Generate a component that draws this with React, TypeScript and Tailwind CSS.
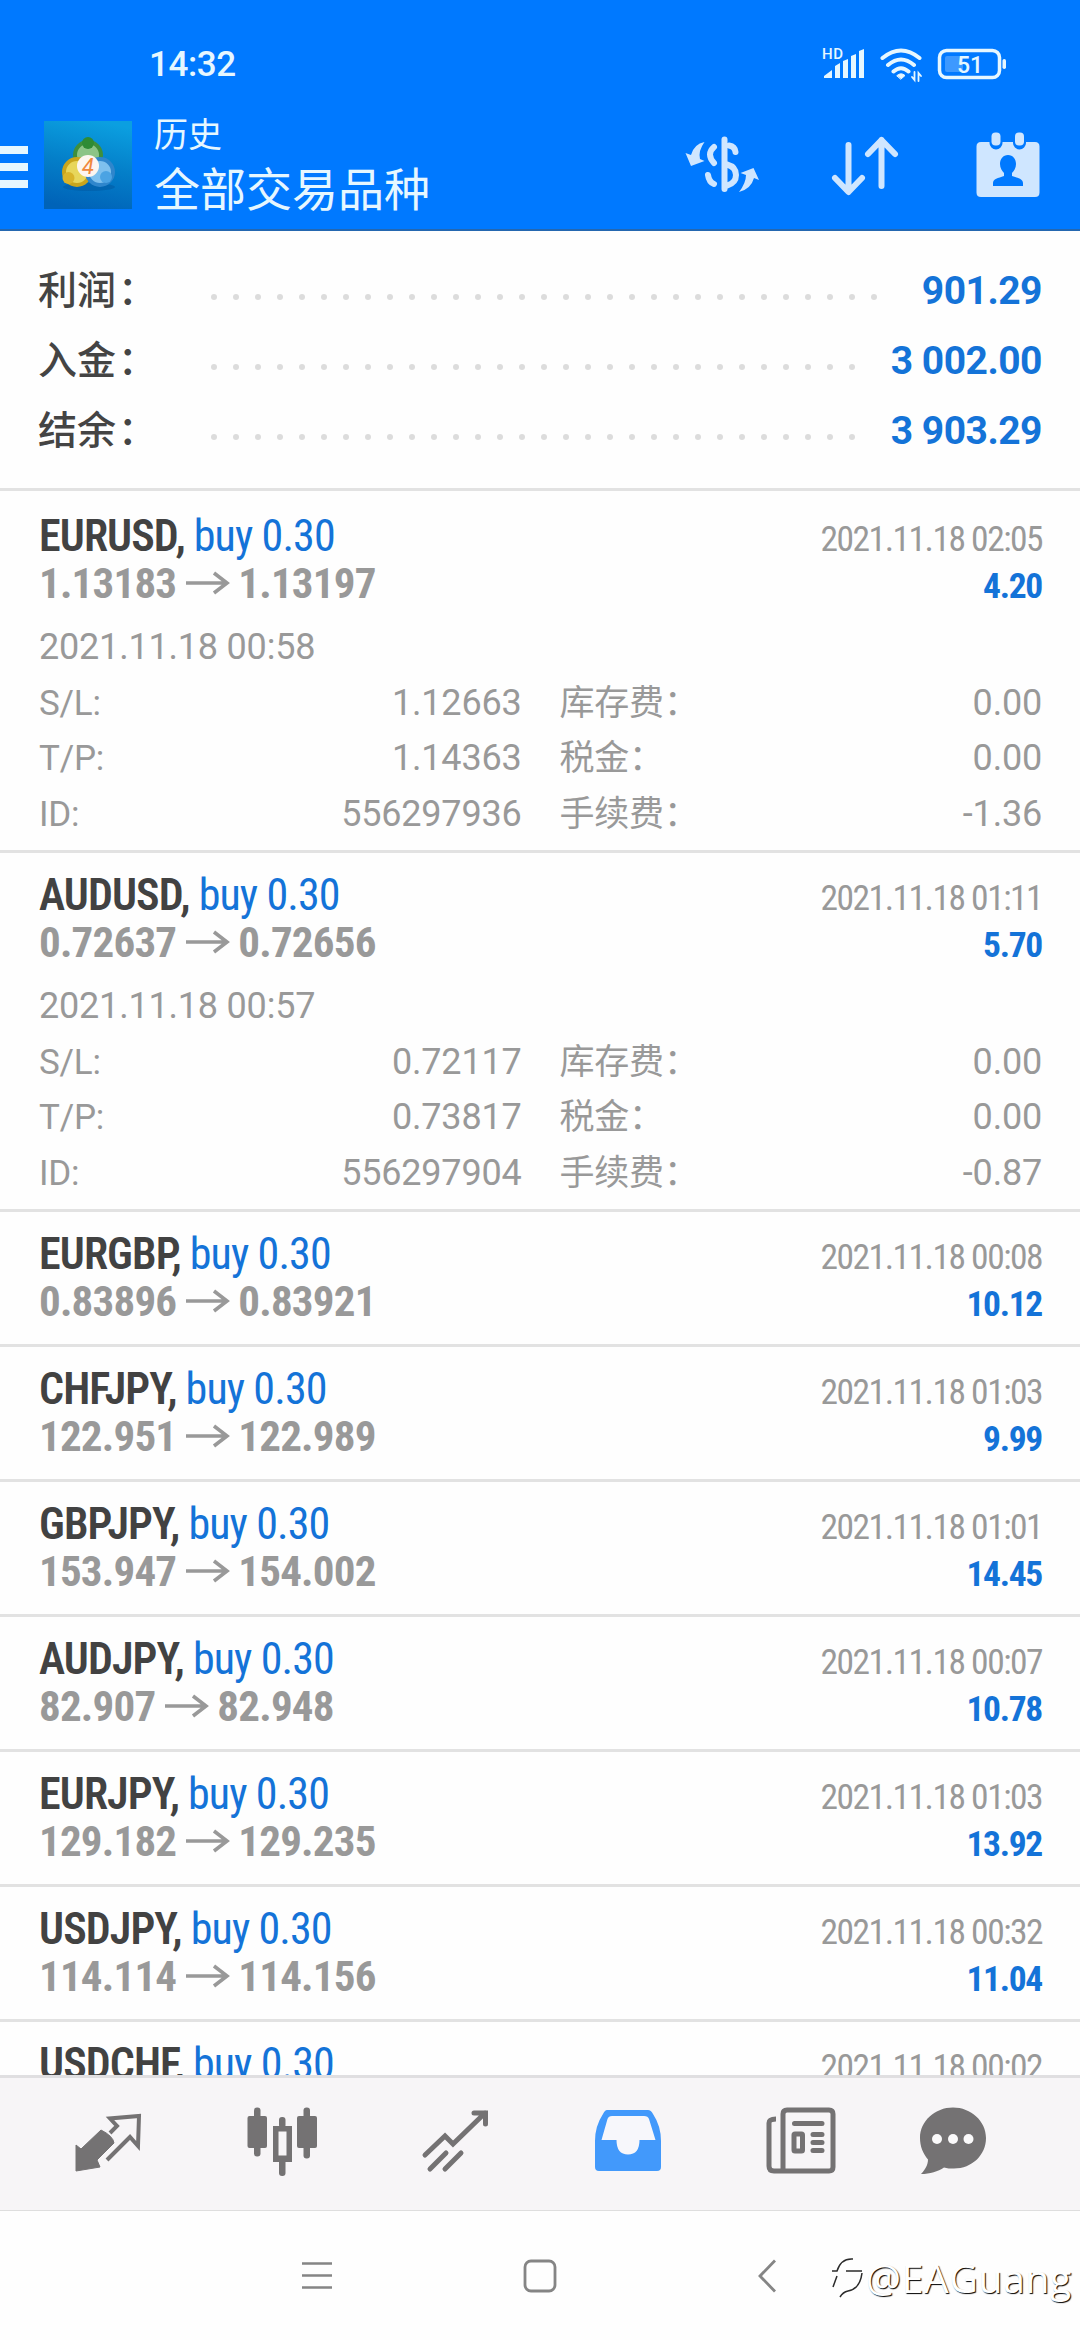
import React from 'react';

interface Deal {
  symbol: string;
  open: string;
  close: string;
  time: string;
  profit: string;
  details?: {
    openTime: string;
    sl: string;
    tp: string;
    id: string;
    swap: string;
    tax: string;
    fee: string;
  };
}

const SUMMARY = [
  { label: '利润', value: '901.29', dots: 31 },
  { label: '入金', value: '3 002.00', dots: 30 },
  { label: '结余', value: '3 903.29', dots: 30 },
];

const DEALS: Deal[] = [
  {
    symbol: 'EURUSD', open: '1.13183', close: '1.13197', time: '2021.11.18 02:05', profit: '4.20',
    details: { openTime: '2021.11.18 00:58', sl: '1.12663', tp: '1.14363', id: '556297936', swap: '0.00', tax: '0.00', fee: '-1.36' },
  },
  {
    symbol: 'AUDUSD', open: '0.72637', close: '0.72656', time: '2021.11.18 01:11', profit: '5.70',
    details: { openTime: '2021.11.18 00:57', sl: '0.72117', tp: '0.73817', id: '556297904', swap: '0.00', tax: '0.00', fee: '-0.87' },
  },
  { symbol: 'EURGBP', open: '0.83896', close: '0.83921', time: '2021.11.18 00:08', profit: '10.12' },
  { symbol: 'CHFJPY', open: '122.951', close: '122.989', time: '2021.11.18 01:03', profit: '9.99' },
  { symbol: 'GBPJPY', open: '153.947', close: '154.002', time: '2021.11.18 01:01', profit: '14.45' },
  { symbol: 'AUDJPY', open: '82.907', close: '82.948', time: '2021.11.18 00:07', profit: '10.78' },
  { symbol: 'EURJPY', open: '129.182', close: '129.235', time: '2021.11.18 01:03', profit: '13.92' },
  { symbol: 'USDJPY', open: '114.114', close: '114.156', time: '2021.11.18 00:32', profit: '11.04' },
  { symbol: 'USDCHF', open: '', close: '', time: '2021.11.18 00:02', profit: '' },
];

const StatusBar = () => (
  <div className="h-[104px] pt-[44px] pl-[149px] pr-[73px] flex justify-between text-[#e6f7ff]">
    <span className="text-[35px] leading-[41px] font-medium tracking-[-0.4px]">14:32</span>
    <div className="flex h-10 items-center">
      {/* signal */}
      <svg className="w-[44px] h-10" viewBox="822 44 44 40" fill="currentColor">
        <text x="822" y="59" fontSize="15" fontWeight="500" letterSpacing="0.6">HD</text>
        <path d="M824 78v-2l8-6v8zM835 66l5-3v15h-5zM843 61l5-2v19h-5zM851 56l5-2v24h-5zM859 51l5-2v29h-5z" />
      </svg>
      {/* wifi */}
      <svg className="w-[44px] h-10 ml-[13px]" viewBox="879 44 44 40" fill="none" stroke="currentColor" strokeWidth="4" strokeLinecap="round">
        <path d="M882.500 58Q901 43 919.500 58M888 65Q901 54 914 65M893.500 71.500Q901 65 908.500 71.500" />
        <path d="M897 75.500Q901 72 905 75.500L901 79z" fill="currentColor" strokeWidth="1" />
        <path d="M914.500 72v8l-2.500-3M918.500 81v-8l2.500 3" strokeWidth="1.800" />
      </svg>
      {/* battery */}
      <svg className="w-[70px] h-10 ml-[14px]" viewBox="937 44 70 40" fill="none">
        <rect x="939.500" y="50.500" width="60" height="27" rx="7" stroke="currentColor" strokeWidth="3.500" />
        <rect x="945" y="56" width="18" height="16" rx="2" fill="#3d99ff" />
        <rect x="1002.500" y="59" width="3.500" height="10" rx="1.700" fill="currentColor" />
        <text x="957" y="72.500" fontSize="23" fontWeight="500" fill="currentColor">51</text>
      </svg>
    </div>
  </div>
);

const AppLogo = () => (
  <svg className="w-[88px] h-[88px] ml-4 mb-[3px]" viewBox="0 0 88 88">
    <defs>
      <linearGradient id="logoBg" x1="0.600" y1="0" x2="0.400" y2="1">
        <stop offset="0" stopColor="#0b9fe0" />
        <stop offset="0.500" stopColor="#047fc9" />
        <stop offset="1" stopColor="#0063b8" />
      </linearGradient>
    </defs>
    <rect width="88" height="88" fill="url(#logoBg)" />
    <ellipse cx="45" cy="66" rx="26" ry="4" fill="#01579f" opacity="0.500" />
    <circle cx="44" cy="34" r="13" fill="#8cc487" stroke="#3f8f3c" strokeWidth="4" />
    <circle cx="33" cy="51" r="13" fill="#e8d65a" stroke="#c9a51c" strokeWidth="4" />
    <circle cx="56" cy="51" r="13" fill="#7ec0ee" stroke="#2f86cc" strokeWidth="4" />
    <circle cx="44" cy="22" r="6" fill="#2e8b35" />
    <circle cx="24.500" cy="57" r="6" fill="#d9b42a" />
    <circle cx="62" cy="56" r="6" fill="#4ba3e3" />
    <circle cx="44" cy="45" r="11" fill="#fdf6f0" />
    <text x="44" y="53" textAnchor="middle" fontSize="22" fontStyle="italic" fill="#f0883c">4</text>
  </svg>
);

const AppBar = () => (
  <div className="h-[125px] flex items-center text-[#e6f7ff]">
    <div className="flex flex-col gap-[9px] w-7">
      <div className="h-2 bg-current" />
      <div className="h-2 bg-current" />
      <div className="h-2 bg-current" />
    </div>
    <AppLogo />
    <div className="ml-[22px] flex-1 pt-[2px]">
      <div className="text-[34px] leading-[45px]">历史</div>
      <div className="text-[46px] leading-[64px]">全部交易品种</div>
    </div>
    <div className="flex text-[#cfe6ff] pr-[34px] pb-1">
      <svg className="w-[80px] h-[70px] mr-[68px]" viewBox="682 129 80 70" fill="none" stroke="currentColor" strokeWidth="6" strokeLinecap="round">
        <path d="M724.500 138.500v49.500" />
        <path d="M714 146Q706 153 714 162M729 144.500Q735 145.500 735.500 151M727 163.500Q736 166 736 174Q736 182 727 184.500M708 174Q709 181 714 183" />
        <path stroke="none" fill="currentColor" d="M704.500 141Q694 143 691 154L685.500 152L691 165L704.500 160L700 158Q698 150 704.500 141ZM739 191Q751 188 754 177L759 179L753.500 167L740.500 172L746 174Q746 182 739 191Z" />
      </svg>
      <svg className="w-[70px] h-[70px] mr-[73px]" viewBox="830 129 70 70" fill="none" stroke="currentColor" strokeWidth="6" strokeLinecap="round" strokeLinejoin="round">
        <path d="M848.500 144v46M835 177l13.500 14l13.500-14M881.500 185v-46M868 153l13.500-14l13.500 14" />
      </svg>
      <svg className="w-[73px] h-[70px]" viewBox="973 129 73 70" fill="currentColor">
        <path d="M981 141h8.500v1a6.500 6.500 0 0 0 13 0v-1h10.500v1a6.500 6.500 0 0 0 13 0v-1h9q4.500 0 4.500 4.500v46q0 4.500-4.500 4.500h-54q-4.500 0-4.500-4.500v-46q0-4.500 4.500-4.500z" />
        <rect x="991.500" y="131.500" width="9" height="13" rx="4" />
        <rect x="1015" y="131.500" width="9" height="13" rx="4" />
        <path fill="#0079ff" d="M1008 154c5 0 8 4 8 9c0 4-2 7-4 9v3c6 2 11 3 11 7v3h-30v-3c0-4 5-5 11-7v-3c-2-2-4-5-4-9c0-5 3-9 8-9z" />
      </svg>
    </div>
  </div>
);

const Summary = () => (
  <div className="h-[260px] border-b-[3px] border-[#e2e2e2] pt-[25px] pl-[38px] pr-[38px]">
    {SUMMARY.map((row) => (
      <div key={row.label} className="flex h-[70px] items-center justify-between text-[39px] leading-[70px]">
        <div className="flex items-center">
          <span className="w-[173px] font-medium text-[#444444]">
            {row.label}<span className="ml-[2px]">：</span>
          </span>
          <div className="flex gap-4 pt-[12px]">
            {Array.from({ length: row.dots }, (_, i) => (
              <span key={i} className="size-1.5 rounded-full bg-[#dcdcdc]" />
            ))}
          </div>
        </div>
        <span className="font-bold tracking-[-0.5px] text-[#1473d8]">{row.value}</span>
      </div>
    ))}
  </div>
);

const DetailCell = ({ label, value }: { label: string; value: string }) => (
  <div className="flex justify-between">
    <span className="text-[35px]">{label}</span>
    <span>{value}</span>
  </div>
);

const DealRow = ({ deal }: { deal: Deal }) => (
  <div className="pt-[18px] pl-[39px] pr-[38px] border-b-[3px] border-[#e2e2e2]">
    <div className="flex h-12 items-baseline justify-between leading-[48px] [font-stretch:75%]">
      <div className="text-[44px]">
        <span className="font-semibold tracking-[-0.9px] text-[#424242]">{deal.symbol},</span>
        <span className="ml-[9px] tracking-[-0.9px] text-[#1473d8]">buy 0.30</span>
      </div>
      <span className="text-[35.5px] tracking-[-1.5px] text-[#999999]">{deal.time}</span>
    </div>
    <div className="flex h-12 items-baseline justify-between leading-[47px] font-bold [font-stretch:75%]">
      <div className="flex text-[43px] text-[#999999]">
        <span className="tracking-[-0.8px]">{deal.open}</span>
        {deal.open && (
          <svg className="w-[44px] h-6 ml-[10px] mr-[8px] mt-[11px]" viewBox="0 0 44 24" fill="none" stroke="currentColor" strokeWidth="3.600">
            <path d="M0 12h41M28 2l13 10l-13 10" />
          </svg>
        )}
        <span className="tracking-[-0.8px]">{deal.close}</span>
      </div>
      <span className="text-[35.5px] tracking-[-1.3px] text-[#1473d8]">{deal.profit}</span>
    </div>
    {deal.details ? (
      <div className="pt-[12px] pb-[8px] text-[36px] leading-[55.5px] text-[#999999]">
        <div className="tracking-[-0.2px]">{deal.details.openTime}</div>
        <div className="grid grid-cols-2 gap-x-[38px] tracking-[-0.2px]">
          <DetailCell label="S/L:" value={deal.details.sl} />
          <DetailCell label="库存费：" value={deal.details.swap} />
          <DetailCell label="T/P:" value={deal.details.tp} />
          <DetailCell label="税金：" value={deal.details.tax} />
          <DetailCell label="ID:" value={deal.details.id} />
          <DetailCell label="手续费：" value={deal.details.fee} />
        </div>
      </div>
    ) : (
      <div className="h-[18px]" />
    )}
  </div>
);

const TabBar = () => (
  <div className="h-[136px] shrink-0 border-t-[3px] border-b border-t-[#e0dfe1] border-b-[#dedede] bg-[#f7f5f7] pl-[22px] flex text-[#747273]">
    {/* quotes */}
    <div className="w-[173px] flex justify-center pt-[26px]">
      <svg className="w-[74px] h-[76px]" viewBox="72 2104 74 76" fill="none" stroke="currentColor" strokeWidth="4">
        <path fill="currentColor" strokeWidth="1" d="M76 2145l5 4l20-19q12 6 13 13l-17 17l3 7l-24 4z" />
        <path d="M107 2160l23-23l8 9l1-30l-29 2.500l7 7.500l-7 7" />
      </svg>
    </div>
    {/* chart */}
    <div className="w-[173px] flex justify-center pt-[26px]">
      <svg className="w-[74px] h-[76px]" viewBox="244 2104 74 76" fill="currentColor">
        <rect x="253" y="2107.500" width="6.500" height="49" rx="3" />
        <rect x="246.500" y="2116" width="19.500" height="32" rx="2" />
        <rect x="302.500" y="2107.500" width="6.500" height="51" rx="3" />
        <rect x="296" y="2116" width="20" height="32" rx="2" />
        <rect x="278" y="2117" width="6.500" height="11" rx="3" />
        <rect x="278" y="2158" width="6.500" height="18" rx="3" />
        <path fillRule="evenodd" d="M272 2126h19v36h-19zM277.500 2131.500v24h8v-24z" />
      </svg>
    </div>
    {/* trade */}
    <div className="w-[173px] flex justify-center pt-[26px]">
      <svg className="w-[74px] h-[76px]" viewBox="417 2104 74 76" fill="none" stroke="currentColor" strokeWidth="5" strokeLinecap="round">
        <path d="M424 2155l20-19l8 8l32-31M473 2113h11.500v11M429 2169l16-16M444 2169l16-16" />
      </svg>
    </div>
    {/* history, active */}
    <div className="w-[173px] flex justify-center pt-[26px]">
      <svg className="w-[74px] h-[76px]" viewBox="591 2104 74 76">
        <path fill="#4299fb" d="M607 2110h41q3 0 5 4q8 12 8 27v26q0 4-4 4h-58q-4 0-4-4v-26q0-15 8-27q2-4 4-4z" />
        <path fill="#f7f7fb" d="M612 2116h32q4 0 5 3l6.500 21h-16q0 14.500-11.500 14.500t-11.500-14.500h-15l6-21q1-3 4.500-3z" />
      </svg>
    </div>
    {/* news */}
    <div className="w-[173px] flex justify-center pt-[26px]">
      <svg className="w-[74px] h-[76px]" viewBox="764 2104 74 76" fill="none" stroke="currentColor" strokeWidth="5">
        <path d="M783 2171v-57q0-4 4-4h42q4 0 4 4v53q0 4-4 4h-55q-5 0-5-5v-43q0-4 7-4" />
        <path d="M794.500 2123.500h27.500M813 2134.500h9M813 2142.500h9M813 2150.500h9" strokeLinecap="round" />
        <rect x="794" y="2134" width="8.500" height="17" rx="1" />
      </svg>
    </div>
    {/* chat */}
    <div className="w-[131px] flex justify-center pt-[26px]">
      <svg className="w-[74px] h-[76px]" viewBox="916 2104 74 76" fill="currentColor">
        <path d="M953 2107.500c18 0 33 13.500 33 30.500s-14 30.500-32 30.500c-4 0-7 0-10-1c-6 4-14 6.500-23 6.500c4-4 7-9 7-14.500c-5-6-8-13-8-21.500c0-17 15-30.500 33-30.500z" />
        <circle cx="937" cy="2139" r="5" fill="#fbfafb" />
        <circle cx="953" cy="2139" r="5" fill="#fbfafb" />
        <circle cx="968.500" cy="2139" r="5" fill="#fbfafb" />
      </svg>
    </div>
  </div>
);

const SystemNav = () => (
  <div className="relative h-[129px] shrink-0 bg-[#fefefe] text-[#858585]">
    <div className="flex items-center h-[129px] pl-[300px]">
      <svg className="w-9 h-9" viewBox="0 0 36 36" fill="none" stroke="currentColor" strokeWidth="2.600">
        <path d="M2 5.500h30M2 17.500h30M2 29.500h30" />
      </svg>
      <svg className="w-9 h-9 ml-[186px]" viewBox="0 0 36 36" fill="none" stroke="currentColor" strokeWidth="2.800">
        <rect x="3" y="3" width="30" height="30" rx="6" />
      </svg>
      <svg className="w-6 h-9 ml-[197px]" viewBox="0 0 24 36" fill="none" stroke="currentColor" strokeWidth="2.800">
        <path d="M20 2.500l-15 15.500l15 15.500" />
      </svg>
    </div>
    {/* author's mark over the corner */}
    <div className="absolute right-[8px] top-[46px] flex items-center">
      <svg className="w-[34px] h-[42px] mr-px" viewBox="0 0 34 42" fill="none" stroke="#2b2b2b" strokeWidth="1.500">
        <path d="M1 14h5q4-13 16-12M15 14h16M2 30l4-11M31 16q-2 16-14 18q-5 1-8 6" />
      </svg>
      <span className="text-[39px] leading-[42px] tracking-[0.7px] text-white font-['Open_Sans'] [text-shadow:1px_1px_1px_#000] whitespace-nowrap">@EAGuang</span>
    </div>
  </div>
);

export default function App() {
  return (
    <div className="w-[1080px] h-[2340px] flex flex-col overflow-hidden bg-[#fefefe] font-['Roboto','Noto_Sans_CJK_SC',sans-serif]">
      <header className="h-[231px] shrink-0 bg-[#0079ff] border-b-2 border-[#2467b0]">
        <StatusBar />
        <AppBar />
      </header>
      <Summary />
      <main className="flex-1 min-h-0 overflow-hidden pt-[3px]">
        {DEALS.map((deal) => (
          <DealRow key={deal.symbol} deal={deal} />
        ))}
      </main>
      <TabBar />
      <SystemNav />
    </div>
  );
}
